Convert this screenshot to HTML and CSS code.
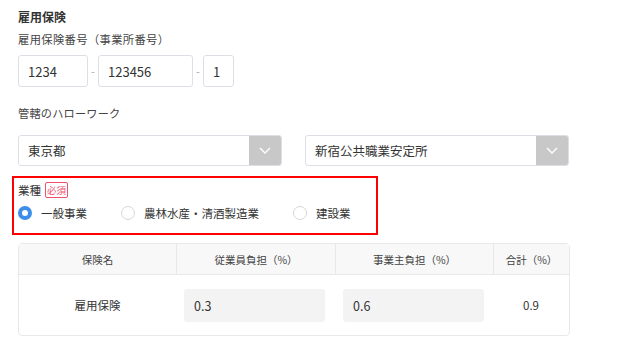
FILE: index.html
```html
<!DOCTYPE html>
<html lang="ja">
<head>
    <meta charset="UTF-8">
    <meta name="viewport" content="width=device-width, initial-scale=1.0">
    <title>雇用保険</title>
    <link rel="stylesheet" href="styles.css">
</head>
<body>
    <div class="page">
        <h2 class="section-title">雇用保険</h2>

        <div class="field-label">雇用保険番号（事業所番号）</div>
        <div class="number-group">
            <input class="text-input num-a" type="text" value="1234">
            <span class="dash">-</span>
            <input class="text-input num-b" type="text" value="123456">
            <span class="dash">-</span>
            <input class="text-input num-c" type="text" value="1">
        </div>

        <div class="field-label label-office">管轄のハローワーク</div>
        <div class="select-row">
            <div class="select">
                <span class="select-value">東京都</span>
                <span class="select-arrow">
                    <svg width="12" height="7" viewBox="0 0 12 7"><path d="M1 1l5 5 5-5" fill="none" stroke="#fff" stroke-width="1.4"/></svg>
                </span>
            </div>
            <div class="select">
                <span class="select-value">新宿公共職業安定所</span>
                <span class="select-arrow">
                    <svg width="12" height="7" viewBox="0 0 12 7"><path d="M1 1l5 5 5-5" fill="none" stroke="#fff" stroke-width="1.4"/></svg>
                </span>
            </div>
        </div>

        <div class="industry-box">
            <div class="industry-head">
                <span>業種</span>
                <span class="required">必須</span>
            </div>
            <div class="radio-row">
                <label class="radio checked"><span class="radio-dot"></span>一般事業</label>
                <label class="radio"><span class="radio-dot"></span>農林水産・清酒製造業</label>
                <label class="radio"><span class="radio-dot"></span>建設業</label>
            </div>
        </div>

        <table class="rate-table">
            <thead>
                <tr>
                    <th class="col-name">保険名</th>
                    <th class="col-emp">従業員負担（%）</th>
                    <th class="col-owner">事業主負担（%）</th>
                    <th class="col-total">合計（%）</th>
                </tr>
            </thead>
            <tbody>
                <tr>
                    <td>雇用保険</td>
                    <td class="cell-input"><div class="rate-input">0.3</div></td>
                    <td class="cell-input"><div class="rate-input">0.6</div></td>
                    <td>0.9</td>
                </tr>
            </tbody>
        </table>
    </div>
</body>
</html>
```

FILE: styles.css
```css
* {
    box-sizing: border-box;
    margin: 0;
    padding: 0;
}
body {
    font-family: "Noto Sans CJK JP", "Noto Sans", sans-serif;
    color: #333;
    background-color: #fff;
}
.page {
    padding: 8px 0 0 18px;
    width: 570px;
}
.section-title {
    font-size: 12px;
    font-weight: bold;
    line-height: 18px;
    color: #333;
}
.field-label {
    font-size: 11.3px;
    line-height: 18px;
    letter-spacing: 0.35px;
    margin-top: 4px;
    color: #444;
}
.label-office {
    margin-top: 17px;
    font-size: 11.2px;
    letter-spacing: 0.2px;
}
.number-group {
    display: flex;
    align-items: center;
    margin-top: 7px;
}
.text-input {
    height: 32px;
    border: 1px solid #dcdfe6;
    border-radius: 3px;
    padding: 0 9px;
    font-family: inherit;
    font-size: 13px;
    color: #333;
    outline: none;
}
.num-a { width: 70px; }
.num-b { width: 95px; }
.num-c { width: 31px; padding: 0 0 0 9px; }
.dash {
    width: 10px;
    text-align: center;
    font-size: 11px;
    color: #aaa;
}
.select-row {
    display: flex;
    gap: 23px;
    margin-top: 13px;
}
.select {
    display: flex;
    width: 264px;
    height: 31px;
    border: 1px solid #dcdfe6;
    border-radius: 3px;
    overflow: hidden;
}
.select-value {
    flex: 1;
    display: flex;
    align-items: center;
    padding-left: 9px;
    font-size: 12.5px;
    color: #333;
}
.select-arrow {
    width: 32px;
    background-color: #c8c8c8;
    display: flex;
    align-items: center;
    justify-content: center;
}
.industry-box {
    margin: 10px 0 0 -6px;
    width: 366px;
    border: 2px solid #f00;
    padding: 3px 4px 11px;
}
.industry-head {
    display: flex;
    align-items: center;
    gap: 4px;
    height: 18px;
    font-size: 11.5px;
}
.required {
    font-size: 9.5px;
    color: #f0506e;
    border: 1px solid #f0506e;
    border-radius: 2px;
    padding: 0 1px;
    line-height: 14px;
}
.radio-row {
    display: flex;
    align-items: center;
    margin-top: 5px;
    height: 18px;
}
.radio {
    display: flex;
    align-items: center;
    gap: 9px;
    font-size: 11.5px;
    color: #333;
}
.radio + .radio {
    margin-left: 34px;
}
.radio-dot {
    width: 14px;
    height: 14px;
    border-radius: 50%;
    border: 1px solid #d4d7de;
    background-color: #fff;
}
.radio.checked .radio-dot {
    border: 4px solid #3d8ee8;
}
.rate-table {
    margin-top: 8px;
    width: 552px;
    border: 1px solid #e8e8e8;
    border-radius: 4px;
    border-collapse: separate;
    border-spacing: 0;
    table-layout: fixed;
}
.rate-table th {
    height: 31px;
    background-color: #f8f8f8;
    font-size: 10.5px;
    font-weight: normal;
    color: #444;
    border-bottom: 1px solid #e8e8e8;
}
.rate-table th + th {
    border-left: 1px solid #e8e8e8;
}
.col-name { width: 157px; }
.col-emp { width: 159px; }
.col-owner { width: 158px; }
.rate-table td {
    height: 60px;
    text-align: center;
    font-size: 11.5px;
    color: #333;
}
.rate-table td.cell-input {
    text-align: left;
    padding-left: 8px;
}
.rate-input {
    width: 141px;
    height: 33px;
    border-radius: 3px;
    background-color: #f3f3f3;
    display: flex;
    align-items: center;
    padding-left: 10px;
    font-size: 12.5px;
}
```
